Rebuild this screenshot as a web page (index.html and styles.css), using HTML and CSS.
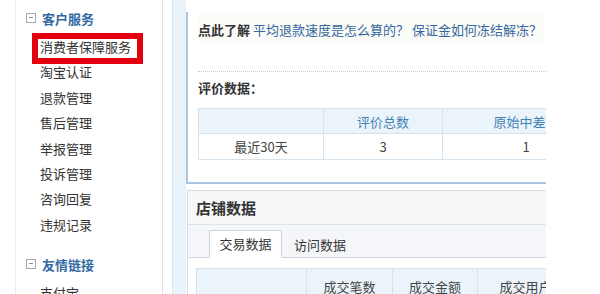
FILE: index.html
```html
<!DOCTYPE html>
<html lang="zh-CN">
<head>
  <meta charset="UTF-8">
  <title>消费者保障服务</title>
  <link rel="stylesheet" href="styles.css">
</head>
<body>
  <div class="page">
    <!-- menu on the left -->
    <div class="sidebar">
      <div class="menu-title"><span class="fold"></span>客户服务</div>
      <ul class="menu">
        <li class="marked">消费者保障服务<span class="mark"></span></li>
        <li>淘宝认证</li>
        <li>退款管理</li>
        <li>售后管理</li>
        <li>举报管理</li>
        <li>投诉管理</li>
        <li>咨询回复</li>
        <li>违规记录</li>
      </ul>
      <div class="menu-title second"><span class="fold"></span>友情链接</div>
      <ul class="menu">
        <li>支付宝</li>
      </ul>
    </div>

    <div class="gutter"></div>

    <div class="main">
      <div class="panel panel-top">
        <div class="tip">
          <b>点此了解</b> <a href="#">平均退款速度是怎么算的？</a> <a href="#">保证金如何冻结解冻？</a>
        </div>
        <div class="divider"></div>
        <div class="sub-title">评价数据：</div>
        <table class="grid rate">
          <tr>
            <th class="c1"></th>
            <th class="c2">评价总数</th>
            <th class="c3">原始中差评</th>
          </tr>
          <tr>
            <td>最近30天</td>
            <td>3</td>
            <td>1</td>
          </tr>
        </table>
      </div>

      <div class="panel panel-shop">
        <div class="panel-head">店铺数据</div>
        <div class="tabs">
          <span class="tab active">交易数据</span>
          <span class="tab">访问数据</span>
        </div>
        <div class="panel-body">
          <table class="grid trade">
            <tr>
              <th class="t1"></th>
              <th class="t2">成交笔数</th>
              <th class="t3">成交金额</th>
              <th class="t4">成交用户数</th>
            </tr>
          </table>
        </div>
      </div>
    </div>
  </div>
</body>
</html>
```

FILE: styles.css
```css
body {
  margin: 0;
  background-color: #fff;
  font-family: "Noto Sans CJK SC", "DejaVu Sans", sans-serif;
  font-size: 13px;
  color: #333;
}
.page {
  display: flex;
  height: 294px;
  overflow: hidden;
}

/* sidebar */
.sidebar {
  margin-left: 15px;
  width: 148px;
  padding: 5px 0 0 24px;
  box-sizing: border-box;
  border-left: 1px solid #e9eef3;
  border-right: 1px solid #dbe4ed;
}
.menu-title {
  display: flex;
  align-items: center;
  height: 26px;
  margin-bottom: 3px;
  font-weight: bold;
  color: #3369a2;
}
.menu-title.second {
  margin-top: 14px;
}
.fold {
  position: relative;
  width: 8px;
  height: 8px;
  margin-left: -14px;
  margin-right: 6px;
  border: 1px solid #a3a9b0;
}
.fold::after {
  content: "";
  position: absolute;
  left: 2px;
  top: 3px;
  width: 4px;
  height: 1px;
  background-color: #8a9098;
}
.menu {
  list-style: none;
  margin: 0;
  padding: 0;
}
.menu li {
  line-height: 25.4px;
  white-space: nowrap;
}
.marked {
  position: relative;
}
.mark {
  position: absolute;
  left: -8px;
  top: -1px;
  width: 99px;
  height: 19px;
  border: 6px solid #e4000f;
}

.gutter {
  margin-left: 9px;
  width: 13px;
  background-color: #eaf2fa;
  border-left: 1px solid #d6e4f0;
}

/* main column */
.main {
  width: 360px;
  overflow: hidden;
}
.panel-top {
  width: 420px;
  padding: 0 0 22px 10px;
  border-left: 2px solid #a6c6e2;
  border-bottom: 2px solid #a6c6e2;
}
.tip {
  margin-top: 12px;
  width: 346px;
  padding: 8px 0 4px;
  line-height: 20px;
  background-color: #fbfbf8;
  white-space: nowrap;
}
.tip b {
  color: #333;
}
.tip a {
  color: #35689f;
  text-decoration: none;
}
.divider {
  margin-top: 27px;
  border-top: 1px dotted #c8c8c8;
  width: 350px;
}
.sub-title {
  margin-top: 6px;
  line-height: 20px;
  font-weight: bold;
}
.grid {
  border-collapse: collapse;
  table-layout: fixed;
  margin-top: 10px;
}
.grid th, .grid td {
  border: 1px solid #d6e2ec;
  text-align: center;
  font-weight: normal;
  padding: 0;
  white-space: nowrap;
  overflow: hidden;
}
.grid th {
  height: 24px;
  background-color: #ebf4fb;
  color: #3f82b4;
}
.grid td {
  height: 25px;
  color: #444;
}
.rate {
  width: 408px;
}
.rate .c1 { width: 124px; }
.rate .c2 { width: 118px; }
.rate .c3 { width: 166px; }

.panel-shop {
  width: 420px;
  margin-top: 6px;
  margin-left: 1px;
  border: 1px solid #d5dde6;
  border-right: none;
  border-bottom: none;
}
.panel-head {
  height: 33px;
  line-height: 33px;
  padding-left: 8px;
  font-size: 15px;
  font-weight: bold;
  background-color: #f7f8fa;
  border-bottom: 1px solid #dde3ea;
}
.tabs {
  display: flex;
  align-items: flex-end;
  height: 32px;
  padding-left: 21px;
  background-color: #f4f6f9;
  border-bottom: 1px solid #cdd6df;
}
.tab {
  height: 26px;
  line-height: 26px;
  padding: 0 12px;
  margin-bottom: -1px;
}
.tab.active {
  width: 71px;
  padding: 0;
  text-align: center;
  background-color: #fff;
  border: 1px solid #c9d3dd;
  border-bottom-color: #fff;
}
.panel-body {
  padding-left: 8px;
  background-color: #fff;
}
.trade {
  width: 386px;
}
.trade .t1 { width: 109px; }
.trade .t2 { width: 85px; }
.trade .t3 { width: 84px; }
.trade .t4 { width: 108px; }
.trade th {
  height: 34px;
  color: #444;
}
```
